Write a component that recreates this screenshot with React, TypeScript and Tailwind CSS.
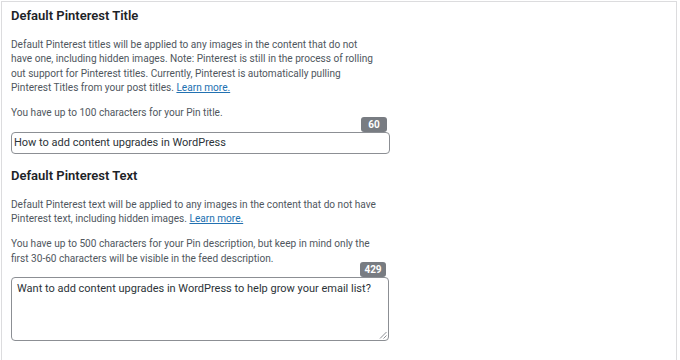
import React from "react";

const body = "text-[10.1px] leading-[14.4px] text-[#50575e] whitespace-nowrap";
const heading = "text-[13px] leading-[16px] font-semibold text-[#1d2327]";
const badge = "self-end mr-[3px] mt-[-4px] w-[26px] h-[15px] rounded-[3px] bg-[#787c82] text-white text-[10px] font-bold leading-[15px] text-center";

export default function App() {
  return (
    <div className="w-[680px] h-[360px] bg-white overflow-hidden" style={{ fontFamily: "Roboto, Arial, sans-serif" }}>
      <div className="ml-[1px] mt-[1px] w-[676px] h-[400px] border border-[#dcdcde] border-b-0 pl-[9px] pt-[6px]">
        <h2 className={heading}>Default Pinterest Title</h2>
        <p className={`mt-[14px] ${body}`}>
          Default Pinterest titles will be applied to any images in the content that do not
          <br />
          have one, including hidden images. Note: Pinterest is still in the process of rolling
          <br />
          out support for Pinterest titles. Currently, Pinterest is automatically pulling
          <br />
          Pinterest Titles from your post titles.{" "}
          <a className="text-[#2271b1] underline">Learn more.</a>
        </p>
        <div className="w-[379px] flex flex-col">
          <p className={`mt-[10.6px] ${body}`}>You have up to 100 characters for your Pin title.</p>
          <span className={badge}>60</span>
          <div className="w-full h-[22.5px] border border-[#8c8f94] rounded-[4px] pl-[2px] text-[11px] leading-[20.5px] text-[#2c3338] whitespace-nowrap">
            How to add content upgrades in WordPress
          </div>
        </div>
        <h2 className={`mt-[13.6px] ${heading}`}>Default Pinterest Text</h2>
        <p className={`mt-[14px] ${body}`}>
          Default Pinterest text will be applied to any images in the content that do not have
          <br />
          Pinterest text, including hidden images.{" "}
          <a className="text-[#2271b1] underline">Learn more.</a>
        </p>
        <div className="w-[378px] flex flex-col">
          <p className={`mt-[10.6px] ${body}`}>
            You have up to 500 characters for your Pin description, but keep in mind only the
            <br />
            first 30-60 characters will be visible in the feed description.
          </p>
          <span className={badge}>429</span>
          <div className="relative w-full h-[64px] border border-[#8c8f94] rounded-[4px] pl-[5px] pt-[3px] text-[11px] leading-[16px] text-[#2c3338] whitespace-nowrap">
            Want to add content upgrades in WordPress to help grow your email list?
            <svg className="absolute right-[1px] bottom-[1px]" width="8" height="8" viewBox="0 0 8 8">
              <line x1="7.5" y1="1" x2="1" y2="7.5" stroke="#8c8f94" strokeWidth="1" />
              <line x1="7.5" y1="4.5" x2="4.5" y2="7.5" stroke="#8c8f94" strokeWidth="1" />
            </svg>
          </div>
        </div>
      </div>
    </div>
  );
}
